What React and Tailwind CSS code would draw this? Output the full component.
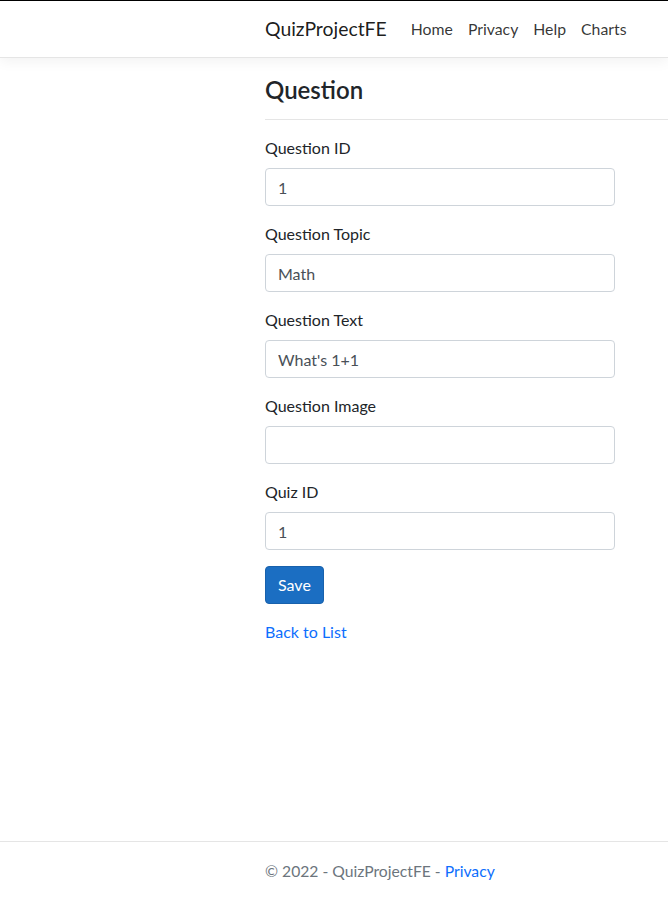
import React from "react";

const fields = [
  { label: "Question ID", value: "1" },
  { label: "Question Topic", value: "Math" },
  { label: "Question Text", value: "What's 1+1" },
  { label: "Question Image", value: "" },
  { label: "Quiz ID", value: "1" },
];

export default function App() {
  return (
    <div
      className="flex flex-col h-[902px] bg-white text-[#212529] border-t border-black"
      style={{ fontFamily: '"Segoe UI", Lato, "Noto Sans", sans-serif' }}
    >
      {/* navbar */}
      <nav className="h-[57px] shrink-0 border-b border-[#e5e5e5] bg-white shadow-[0_4px_12px_rgba(0,0,0,0.05)] flex items-center pl-[265px] relative z-10">
        <span className="text-[19.4px] text-[rgba(0,0,0,0.9)] mr-[24px]">QuizProjectFE</span>
        <div className="flex gap-[15px] text-[15.8px] text-[rgba(0,0,0,0.8)]">
          <a href="#">Home</a>
          <a href="#">Privacy</a>
          <a href="#">Help</a>
          <a href="#">Charts</a>
        </div>
      </nav>

      {/* main */}
      <main className="flex-1 pl-[265px]">
        <h4 className="text-[24px] font-semibold leading-[29px] pt-[17px] pb-[15px]">Question</h4>
        <hr className="border-0 border-t border-[#e5e5e5] mb-[16px]" />
        <form className="w-[350px]">
          {fields.map((f) => (
            <div key={f.label} className="mb-[16px]">
              <label className="block text-[16px] leading-[24px] mb-[8px]">{f.label}</label>
              <input
                defaultValue={f.value}
                className="block w-full h-[38px] px-[12px] text-[16px] text-[#495057] border border-[#ced4da] rounded-[4px] outline-none"
                style={{ fontFamily: "inherit" }}
              />
            </div>
          ))}
          <button
            type="button"
            className="h-[38px] px-[12px] bg-[#1b6ec2] border border-[#1861ac] text-white text-[16px] rounded-[4px]"
          >
            Save
          </button>
        </form>
        <div className="mt-[16px] leading-[24px]">
          <a href="#" className="text-[#0d6efd]">Back to List</a>
        </div>
      </main>

      {/* footer */}
      <footer className="h-[61px] shrink-0 border-t border-[#e5e5e5] flex items-center pl-[265px] text-[#6c757d] text-[15.7px]">
        <span>
          © 2022 - QuizProjectFE - <a href="#" className="text-[#0d6efd]">Privacy</a>
        </span>
      </footer>
    </div>
  );
}
